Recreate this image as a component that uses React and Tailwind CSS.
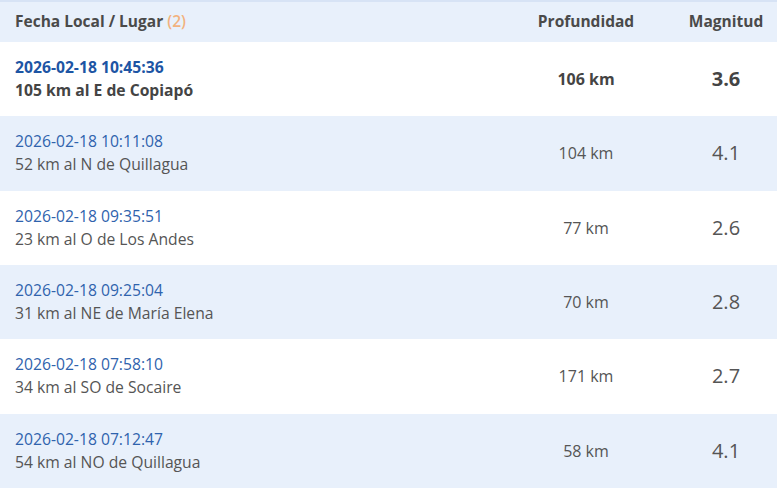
import React from "react";

const rows = [
  { d: "2026-02-18 10:45:36", p: "105 km al E de Copiapó", km: "106 km", m: "3.6", bold: true },
  { d: "2026-02-18 10:11:08", p: "52 km al N de Quillagua", km: "104 km", m: "4.1" },
  { d: "2026-02-18 09:35:51", p: "23 km al O de Los Andes", km: "77 km", m: "2.6" },
  { d: "2026-02-18 09:25:04", p: "31 km al NE de María Elena", km: "70 km", m: "2.8" },
  { d: "2026-02-18 07:58:10", p: "34 km al SO de Socaire", km: "171 km", m: "2.7" },
  { d: "2026-02-18 07:12:47", p: "54 km al NO de Quillagua", km: "58 km", m: "4.1" },
];

export default function App() {
  return (
    <div
      className="w-[777px] h-[488px] flex flex-col bg-white overflow-hidden"
      style={{ fontFamily: '"Open Sans", sans-serif' }}
    >
      <div className="h-[42px] shrink-0 grid grid-cols-[1fr_178px_102px] items-center bg-[#e8f0fb] border-t-2 border-[#d7e3f5] text-[15.5px] font-bold text-[#4a4a4a]">
        <div className="pl-[15px]">
          Fecha Local / Lugar <span className="text-[#f2b27e] font-semibold">(2)</span>
        </div>
        <div className="text-center">Profundidad</div>
        <div className="text-center">Magnitud</div>
      </div>
      {rows.map((r, i) => (
        <div
          key={i}
          className={
            "flex-1 grid grid-cols-[1fr_178px_102px] items-center " +
            (i % 2 === 1 ? "bg-[#e8f0fb]" : "bg-white")
          }
        >
          <div className="pl-[15px] text-[15.7px] leading-[23px]">
            <div className={r.bold ? "text-[#1d55a4] font-bold" : "text-[#2f63ad]"}>{r.d}</div>
            <div className={r.bold ? "text-[#444] font-bold" : "text-[#555]"}>{r.p}</div>
          </div>
          <div className={"text-center text-[16px] " + (r.bold ? "font-bold text-[#444]" : "text-[#555]")}>
            {r.km}
          </div>
          <div className={"text-center text-[20px] " + (r.bold ? "font-bold text-[#444]" : "text-[#555]")}>
            {r.m}
          </div>
        </div>
      ))}
    </div>
  );
}
